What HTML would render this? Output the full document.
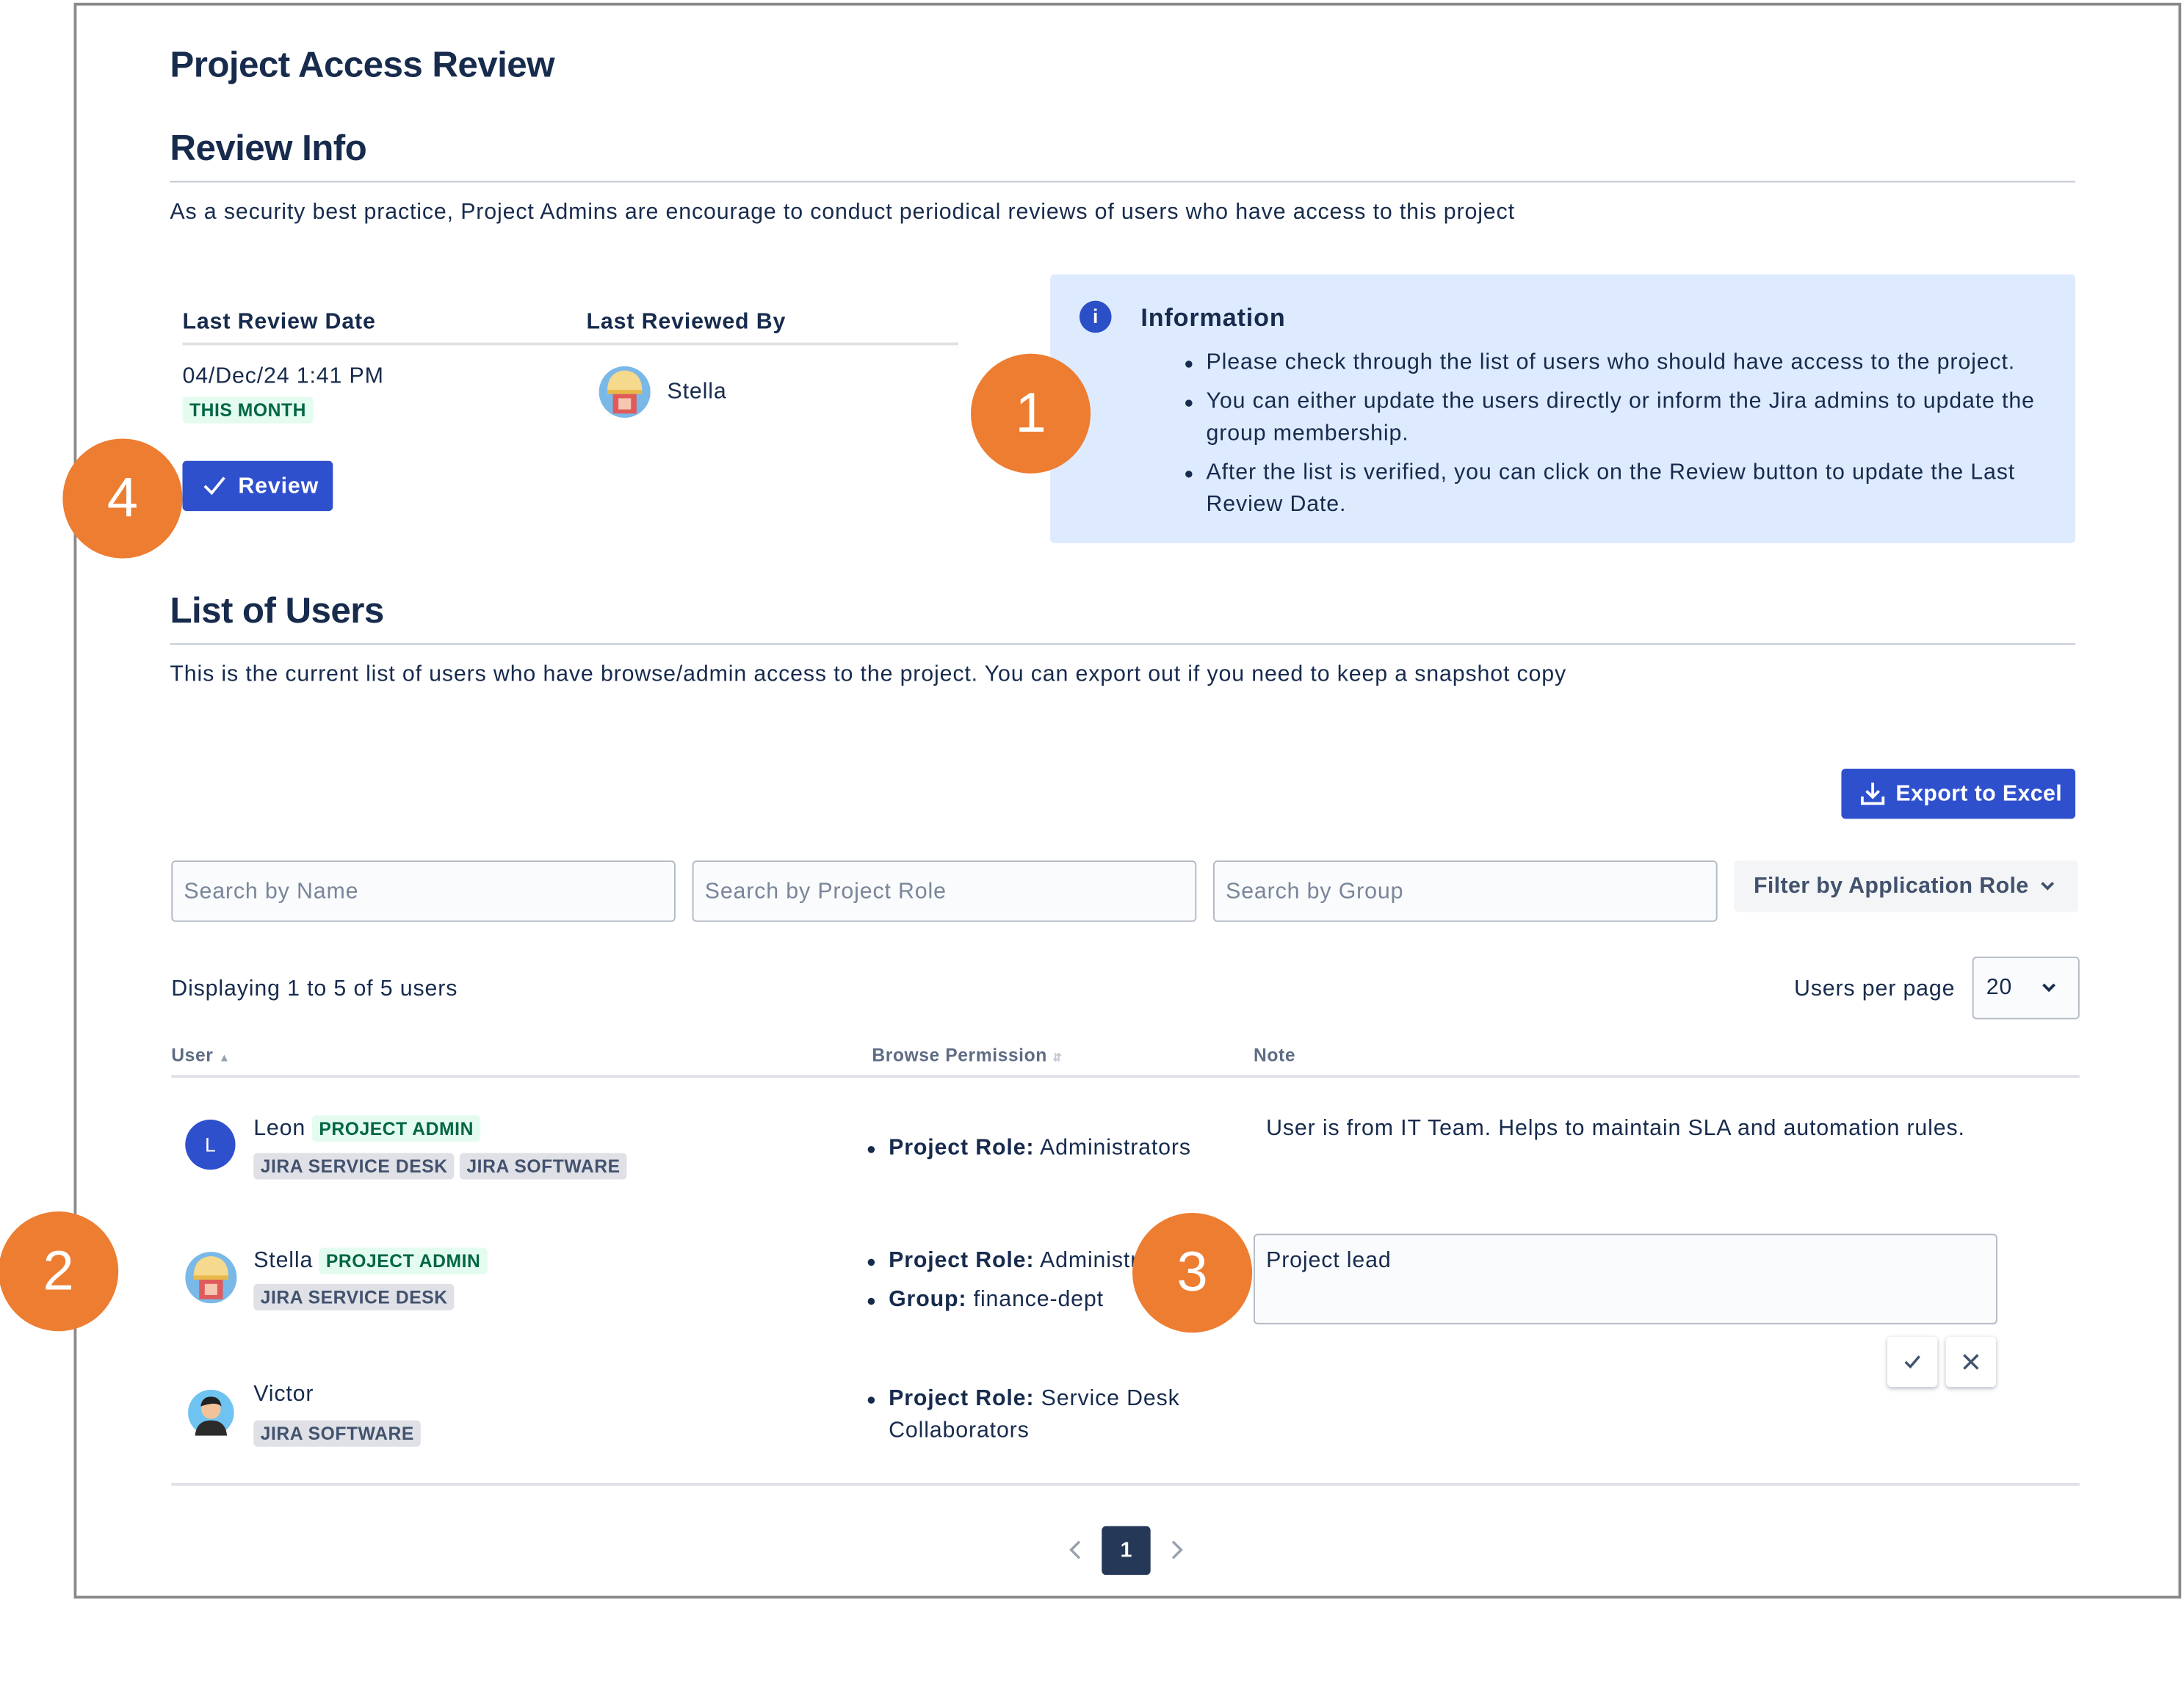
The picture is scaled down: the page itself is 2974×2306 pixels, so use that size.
<!DOCTYPE html>
<html><head><meta charset="utf-8"><style>
html,body{margin:0;padding:0;background:#fff;width:2974px;height:2305px;overflow:hidden}
#w{position:absolute;left:0;top:0;width:1568px;height:1216px;transform:scale(1.8967);transform-origin:0 0;font-family:"Liberation Sans",sans-serif;color:#172b4d;letter-spacing:0.45px}
.a{position:absolute;white-space:nowrap}
.t16{font-size:16px;line-height:18px}
.hr{position:absolute;height:1px;background:#c1c7d0}
.oc{position:absolute;width:86px;height:86px;border-radius:50%;background:#ed7d31;color:#fff;font-size:40px;line-height:86px;text-align:center;letter-spacing:0}
.loz{position:absolute;font-size:13px;font-weight:bold;line-height:19px;height:19px;padding:0 5px;border-radius:3px;letter-spacing:0.3px}
.g{background:#e3fcef;color:#006644}
.gr{background:#dfe1e6;color:#42526e}
.inp{position:absolute;height:44px;border:1px solid #b3b9c4;border-radius:3px;background:#fafbfc;box-sizing:border-box;color:#7a869a;font-size:16px;line-height:44px;padding-left:8px}
.btn{position:absolute;background:#2f50cd;color:#fff;font-weight:bold;font-size:16px;border-radius:3px;box-sizing:border-box}
.bul{position:absolute;font-size:16px;line-height:23px}
.bul::before{content:"";position:absolute;left:-15px;top:10px;width:5px;height:5px;border-radius:50%;background:#172b4d}
h1,h2{margin:0}
.h{font-size:27px;font-weight:bold;line-height:32px;letter-spacing:-0.3px}
</style></head><body><div id="w">
<div style="position:absolute;left:53px;top:2px;width:1513px;height:1146px;border:2px solid #8a8a8a;box-sizing:border-box"></div>

<div class="a h" style="left:122px;top:30px;font-size:26px">Project Access Review</div>
<div class="a h" style="left:122px;top:90px;font-size:26px">Review Info</div>
<div class="hr" style="left:122px;top:130px;width:1368px"></div>
<div class="a t16" style="left:122px;top:144px">As a security best practice, Project Admins are encourage to conduct periodical reviews of users who have access to this project</div>

<div class="a t16" style="left:131px;top:223px;font-weight:bold">Last Review Date</div>
<div class="a t16" style="left:421px;top:223px;font-weight:bold">Last Reviewed By</div>
<div style="position:absolute;left:131px;top:246px;width:557px;height:2px;background:#dfe1e6"></div>
<div class="a t16" style="left:131px;top:262px">04/Dec/24 1:41 PM</div>
<div class="loz g" style="left:131px;top:285px">THIS MONTH</div>
<svg class="a" style="left:430px;top:263px" width="37" height="37" viewBox="0 0 37 37"><circle cx="18.5" cy="18.5" r="18.5" fill="#7ab8e8"/><path d="M6 18 Q6 4 18.5 3 Q31 4 31 18Z" fill="#f5d98c"/><rect x="6" y="17" width="25" height="3" fill="#e8b84a"/><rect x="10" y="20" width="17" height="14" fill="#e05a5a"/><rect x="14" y="23" width="9" height="8" fill="#f6c6b0"/></svg>
<div class="a t16" style="left:479px;top:273px">Stella</div>
<div class="btn" style="left:131px;top:331px;width:108px;height:36px;line-height:37px;padding-left:40px">Review</div>
<svg class="a" style="left:145px;top:341px" width="18" height="16"><path d="M2 8 L7 13 L16 2" stroke="#fff" stroke-width="2" fill="none"/></svg>

<div style="position:absolute;left:754px;top:197px;width:736px;height:193px;background:#deebff;border-radius:3px"></div>
<div class="a" style="left:775px;top:216px;width:23px;height:23px;border-radius:50%;background:#2a4fc7;color:#fff;font-weight:bold;font-size:14px;line-height:23px;text-align:center;letter-spacing:0">i</div>
<div class="a" style="left:819px;top:218px;font-size:18px;font-weight:bold;line-height:20px">Information</div>
<div class="bul" style="left:866px;top:249px">Please check through the list of users who should have access to the project.</div>
<div class="bul" style="left:866px;top:277px;white-space:normal;width:610px">You can either update the users directly or inform the Jira admins to update the group membership.</div>
<div class="bul" style="left:866px;top:328px;white-space:normal;width:610px">After the list is verified, you can click on the Review button to update the Last Review Date.</div>

<div class="a h" style="left:122px;top:422px;font-size:26px">List of Users</div>
<div class="hr" style="left:122px;top:462px;width:1368px"></div>
<div class="a t16" style="left:122px;top:476px">This is the current list of users who have browse/admin access to the project. You can export out if you need to keep a snapshot copy</div>

<div class="btn" style="left:1322px;top:552px;width:168px;height:36px;line-height:37px;padding-left:39px;letter-spacing:0.2px">Export to Excel</div>
<svg class="a" style="left:1335px;top:561px" width="19" height="18"><path d="M9.5 1 V11 M5 7 L9.5 11.5 L14 7 M2 11 V16 H17 V11" stroke="#fff" stroke-width="2" fill="none"/></svg>

<div class="inp" style="left:123px;top:618px;width:362px">Search by Name</div>
<div class="inp" style="left:497px;top:618px;width:362px">Search by Project Role</div>
<div class="inp" style="left:871px;top:618px;width:362px">Search by Group</div>
<div class="a" style="left:1245px;top:618px;width:247px;height:37px;background:#f4f5f7;border-radius:3px;font-size:16px;font-weight:bold;line-height:38px;padding-left:14px;box-sizing:border-box;color:#42526e;letter-spacing:0.2px">Filter by Application Role</div>
<svg class="a" style="left:1464px;top:632px" width="12" height="9"><path d="M2 2 L6 6 L10 2" stroke="#42526e" stroke-width="2" fill="none"/></svg>

<div class="a t16" style="left:123px;top:702px">Displaying 1 to 5 of 5 users</div>
<div class="a t16" style="left:1288px;top:702px">Users per page</div>
<div class="a" style="left:1416px;top:687px;width:77px;height:45px;border:1px solid #b3b9c4;border-radius:3px;background:#fafbfc;box-sizing:border-box;font-size:16px;line-height:44px;padding-left:9px">20</div>
<svg class="a" style="left:1465px;top:705px" width="12" height="9"><path d="M2 2 L6 6 L10 2" stroke="#172b4d" stroke-width="2" fill="none"/></svg>

<div class="a" style="left:123px;top:750px;font-size:13px;font-weight:bold;color:#5e6c84;letter-spacing:0.3px">User <span style="font-size:8px;color:#97a0af">&#9650;</span></div>
<div class="a" style="left:626px;top:750px;font-size:13px;font-weight:bold;color:#5e6c84;letter-spacing:0.3px">Browse Permission <span style="font-size:8px;color:#c1c7d0">&#8693;</span></div>
<div class="a" style="left:900px;top:750px;font-size:13px;font-weight:bold;color:#5e6c84;letter-spacing:0.3px">Note</div>
<div style="position:absolute;left:123px;top:772px;width:1370px;height:2px;background:#dfe1e6"></div>

<div class="a" style="left:133px;top:804px;width:36px;height:36px;border-radius:50%;background:#2f50cd;color:#fff;font-size:14px;line-height:36px;text-align:center;letter-spacing:0">L</div>
<div class="a t16" style="left:182px;top:802px">Leon</div>
<div class="loz g" style="left:224px;top:801px">PROJECT ADMIN</div>
<div class="loz gr" style="left:182px;top:828px">JIRA SERVICE DESK</div>
<div class="loz gr" style="left:330px;top:828px">JIRA SOFTWARE</div>
<div class="bul" style="left:638px;top:813px"><b>Project Role:</b> Administrators</div>
<div class="a t16" style="left:909px;top:802px">User is from IT Team. Helps to maintain SLA and automation rules.</div>

<svg class="a" style="left:133px;top:899px" width="37" height="37" viewBox="0 0 37 37"><circle cx="18.5" cy="18.5" r="18.5" fill="#7ab8e8"/><path d="M6 18 Q6 4 18.5 3 Q31 4 31 18Z" fill="#f5d98c"/><rect x="6" y="17" width="25" height="3" fill="#e8b84a"/><rect x="10" y="20" width="17" height="14" fill="#e05a5a"/><rect x="14" y="23" width="9" height="8" fill="#f6c6b0"/></svg>
<div class="a t16" style="left:182px;top:897px">Stella</div>
<div class="loz g" style="left:229px;top:896px">PROJECT ADMIN</div>
<div class="loz gr" style="left:182px;top:922px">JIRA SERVICE DESK</div>
<div class="bul" style="left:638px;top:894px"><b>Project Role:</b> Administrators</div>
<div class="bul" style="left:638px;top:922px"><b>Group:</b> finance-dept</div>
<div class="a" style="left:900px;top:886px;width:534px;height:65px;border:1px solid #b3b9c4;border-radius:3px;background:#fafbfc;box-sizing:border-box;font-size:16px;padding:10px 8px">Project lead</div>
<div class="a" style="left:1355px;top:960px;width:36px;height:36px;background:#fff;border-radius:3px;box-shadow:0 1px 3px rgba(9,30,66,.3)"></div>
<svg class="a" style="left:1366px;top:971px" width="14" height="14"><path d="M2 7 L5.5 10.5 L12 3" stroke="#42526e" stroke-width="1.8" fill="none"/></svg>
<div class="a" style="left:1397px;top:960px;width:36px;height:36px;background:#fff;border-radius:3px;box-shadow:0 1px 3px rgba(9,30,66,.3)"></div>
<svg class="a" style="left:1408px;top:971px" width="14" height="14"><path d="M2 2 L12 12 M12 2 L2 12" stroke="#42526e" stroke-width="1.8" fill="none"/></svg>

<svg class="a" style="left:135px;top:998px" width="33" height="33" viewBox="0 0 33 33"><circle cx="16.5" cy="16.5" r="16.5" fill="#6fc3f0"/><path d="M5 33 Q6 22 16.5 22 Q27 22 28 33Z" fill="#2b2b2b"/><circle cx="16.5" cy="14" r="7" fill="#f2c29a"/><path d="M9 12 Q10 5 16.5 5 Q23 5 24 12 Q20 8 9 12Z" fill="#222"/></svg>
<div class="a t16" style="left:182px;top:993px">Victor</div>
<div class="loz gr" style="left:182px;top:1020px">JIRA SOFTWARE</div>
<div class="bul" style="left:638px;top:993px"><b>Project Role:</b> Service Desk<br>Collaborators</div>

<div style="position:absolute;left:123px;top:1065px;width:1370px;height:2px;background:#dfe1e6"></div>
<svg class="a" style="left:766px;top:1105px" width="12" height="16"><path d="M9 2 L3 8 L9 14" stroke="#97a0af" stroke-width="1.8" fill="none"/></svg>
<div class="a" style="left:791px;top:1096px;width:35px;height:35px;background:#253858;border-radius:3px;color:#fff;font-size:15px;font-weight:bold;line-height:35px;text-align:center;letter-spacing:0">1</div>
<svg class="a" style="left:839px;top:1105px" width="12" height="16"><path d="M3 2 L9 8 L3 14" stroke="#97a0af" stroke-width="1.8" fill="none"/></svg>

<div class="oc" style="left:697px;top:254px">1</div>
<div class="oc" style="left:45px;top:315px">4</div>
<div class="oc" style="left:-1px;top:870px">2</div>
<div class="oc" style="left:813px;top:871px">3</div>
</div></body></html>
